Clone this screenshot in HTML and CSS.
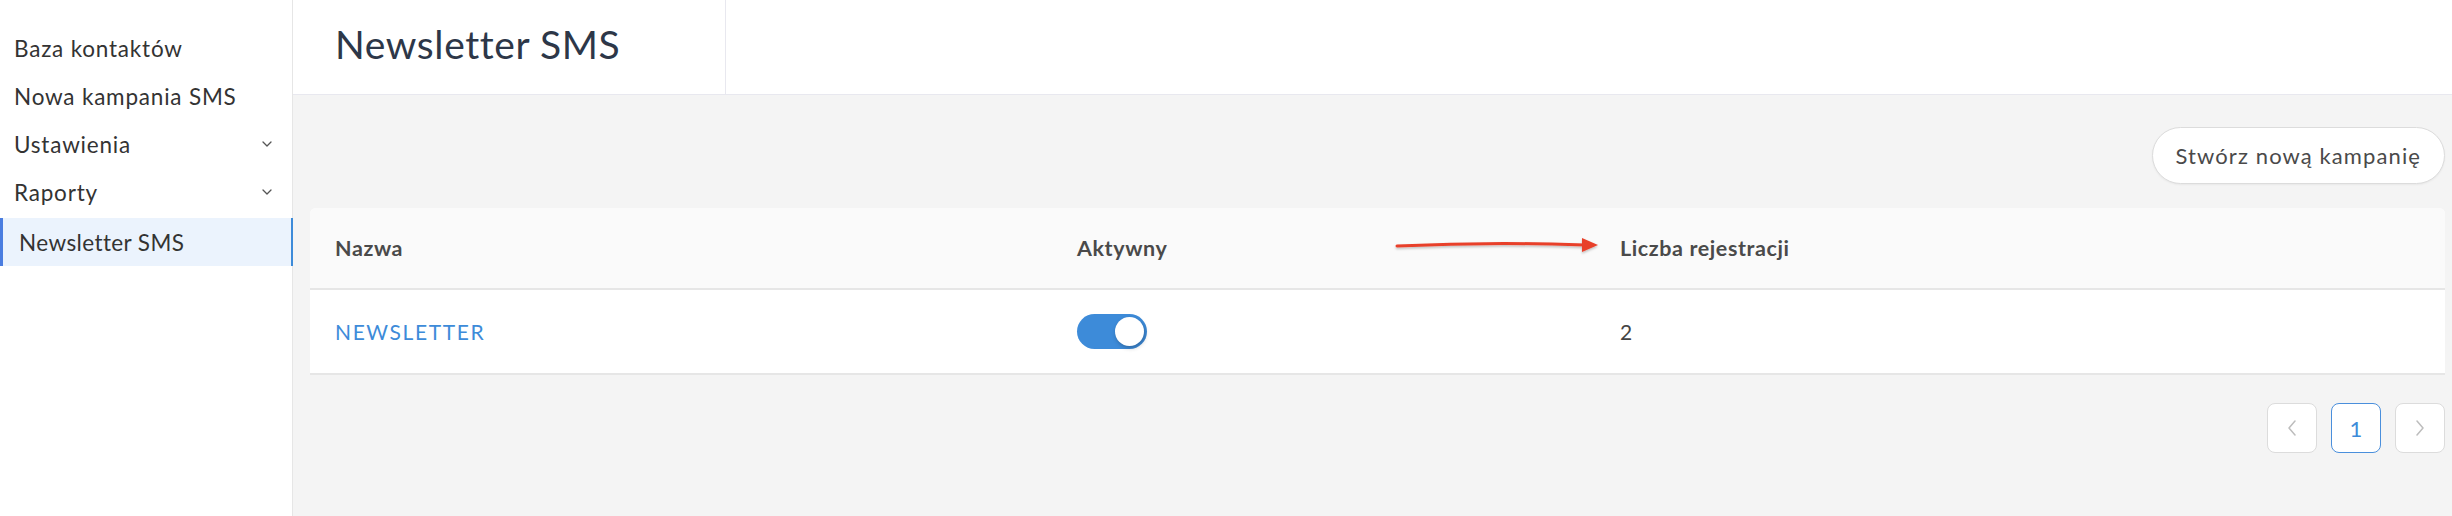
FILE: index.html
```html
<!DOCTYPE html>
<html lang="pl">
<head>
<meta charset="utf-8">
<title>Newsletter SMS</title>
<link rel="stylesheet" href="styles.css">
</head>
<body>
<div class="app">
  <aside class="sidebar">
    <nav class="menu">
      <a class="menu-item">Baza kontaktów</a>
      <a class="menu-item">Nowa kampania SMS</a>
      <a class="menu-item has-sub">Ustawienia
        <svg class="chev" viewBox="0 0 10 6" width="10" height="6"><path d="M1 1 L5 5 L9 1" fill="none" stroke="#555" stroke-width="1.3" stroke-linecap="round" stroke-linejoin="round"/></svg>
      </a>
      <a class="menu-item has-sub">Raporty
        <svg class="chev" viewBox="0 0 10 6" width="10" height="6"><path d="M1 1 L5 5 L9 1" fill="none" stroke="#555" stroke-width="1.3" stroke-linecap="round" stroke-linejoin="round"/></svg>
      </a>
      <a class="menu-item active">Newsletter SMS</a>
    </nav>
  </aside>
  <main class="main">
    <header class="topbar">
      <div class="title-cell"><h1 class="title">Newsletter SMS</h1></div>
      <div class="topbar-rest"></div>
    </header>
    <section class="content">
      <div class="actions">
        <button class="btn-create">Stwórz nową kampanię</button>
      </div>
      <div class="card">
        <div class="row head">
          <div class="cell">Nazwa</div>
          <div class="cell">Aktywny</div>
          <div class="cell">Liczba rejestracji</div>
        </div>
        <div class="row body">
          <div class="cell"><a class="link">NEWSLETTER</a></div>
          <div class="cell"><span class="toggle"><span class="knob"></span></span></div>
          <div class="cell num">2</div>
        </div>
        <svg class="arrow" viewBox="0 0 210 24" width="210" height="24">
          <defs>
            <filter id="sh" x="-5%" y="-50%" width="110%" height="200%">
              <feDropShadow dx="0" dy="1.5" stdDeviation="1.2" flood-color="#000" flood-opacity="0.25"/>
            </filter>
          </defs>
          <g filter="url(#sh)">
            <path d="M4 13 Q 100 8.5 192 12" fill="none" stroke="#e8412b" stroke-width="3" stroke-linecap="round"/>
            <path d="M189 5 L205 12 L189 19 Z" fill="#e8412b"/>
          </g>
        </svg>
      </div>
      <div class="pager">
        <span class="page-btn">
          <svg viewBox="0 0 10 16" width="10" height="16"><path d="M8 1 L2 8 L8 15" fill="none" stroke="#bdbdbd" stroke-width="1.5" stroke-linecap="round" stroke-linejoin="round"/></svg>
        </span>
        <span class="page-btn current">1</span>
        <span class="page-btn">
          <svg viewBox="0 0 10 16" width="10" height="16"><path d="M2 1 L8 8 L2 15" fill="none" stroke="#bdbdbd" stroke-width="1.5" stroke-linecap="round" stroke-linejoin="round"/></svg>
        </span>
      </div>
    </section>
  </main>
</div>
</body>
</html>
```

FILE: styles.css
```css
* { box-sizing: border-box; }
html, body { margin: 0; padding: 0; height: 100%; }
body {
  font-family: Lato, "Open Sans", "Liberation Sans", sans-serif;
  background: #f4f4f4;
  color: #333;
}
.app {
  display: flex;
  height: 516px;
}
.sidebar {
  width: 293px;
  flex: 0 0 293px;
  background: #fff;
  border-right: 1px solid #e6e6e6;
  padding-top: 24px;
}
.menu { display: flex; flex-direction: column; }
.menu-item {
  height: 48px;
  display: flex;
  align-items: center;
  justify-content: space-between;
  padding: 0 20px 0 14px;
  font-size: 22.5px;
  letter-spacing: 0.8px;
  color: #333;
}
.menu-item .chev { flex: none; }
.menu-item.active {
  margin-top: 2px;
  background: #ebf3fd;
  border-left: 3px solid #4a7de0;
  border-right: 2px solid #3d8bd9;
  padding-left: 16px;
  margin-right: -1px;
  letter-spacing: 0.4px;
}
.main {
  flex: 1;
  display: flex;
  flex-direction: column;
  min-width: 0;
}
.topbar {
  height: 95px;
  display: flex;
  background: #fff;
  border-bottom: 1px solid #e8e8ef;
}
.title-cell {
  width: 433px;
  border-right: 1px solid #e8e8ef;
  padding-left: 42px;
  display: flex;
  align-items: center;
}
.title {
  margin: 0;
  font-size: 39px;
  font-weight: 400;
  letter-spacing: 0.6px;
  color: #2d3748;
  padding-bottom: 6px;
}
.topbar-rest { flex: 1; }
.content {
  flex: 1;
  padding: 32px 7px 0 17px;
}
.actions {
  display: flex;
  justify-content: flex-end;
}
.btn-create {
  height: 57px;
  padding: 0 23px;
  border-radius: 29px;
  border: 1px solid #dcdcdc;
  background: #fff;
  font-family: inherit;
  font-size: 22px;
  letter-spacing: 1.1px;
  color: #4a4a4a;
  box-shadow: 0 1px 2px rgba(0,0,0,0.05);
}
.card {
  position: relative;
  margin-top: 24px;
  background: #fff;
  border-radius: 6px 6px 0 0;
}
.row {
  display: grid;
  grid-template-columns: 742px 543px 1fr;
  padding-left: 25px;
  align-items: center;
  border-bottom: 2px solid #e6e6e6;
}
.row.head {
  height: 82px;
  background: #fafafa;
  border-radius: 6px 6px 0 0;
  font-weight: 700;
  font-size: 21.5px;
  letter-spacing: 0.6px;
  color: #4a4a4a;
}
.row.body {
  height: 85px;
  background: #fff;
  font-size: 21px;
  color: #444;
}
.link {
  color: #3d8bd9;
  letter-spacing: 1.6px;
}
.toggle {
  display: flex;
  align-items: center;
  justify-content: flex-end;
  width: 70px;
  height: 35px;
  border-radius: 18px;
  background: #3d8bd9;
  padding: 0 3px;
}
.knob {
  width: 29px;
  height: 29px;
  border-radius: 50%;
  background: #fff;
  box-shadow: 1px 2px 4px rgba(0,0,0,0.25);
}
.arrow {
  position: absolute;
  left: 1083px;
  top: 25px;
}
.pager {
  display: flex;
  justify-content: flex-end;
  gap: 14px;
  margin-top: 28px;
}
.page-btn {
  width: 50px;
  height: 50px;
  border-radius: 8px;
  border: 1px solid #dcdcdc;
  background: #fff;
  display: flex;
  align-items: center;
  justify-content: center;
  font-size: 22px;
  color: #3d8bd9;
}
.page-btn.current {
  border-color: #4a8fdc;
}
```
